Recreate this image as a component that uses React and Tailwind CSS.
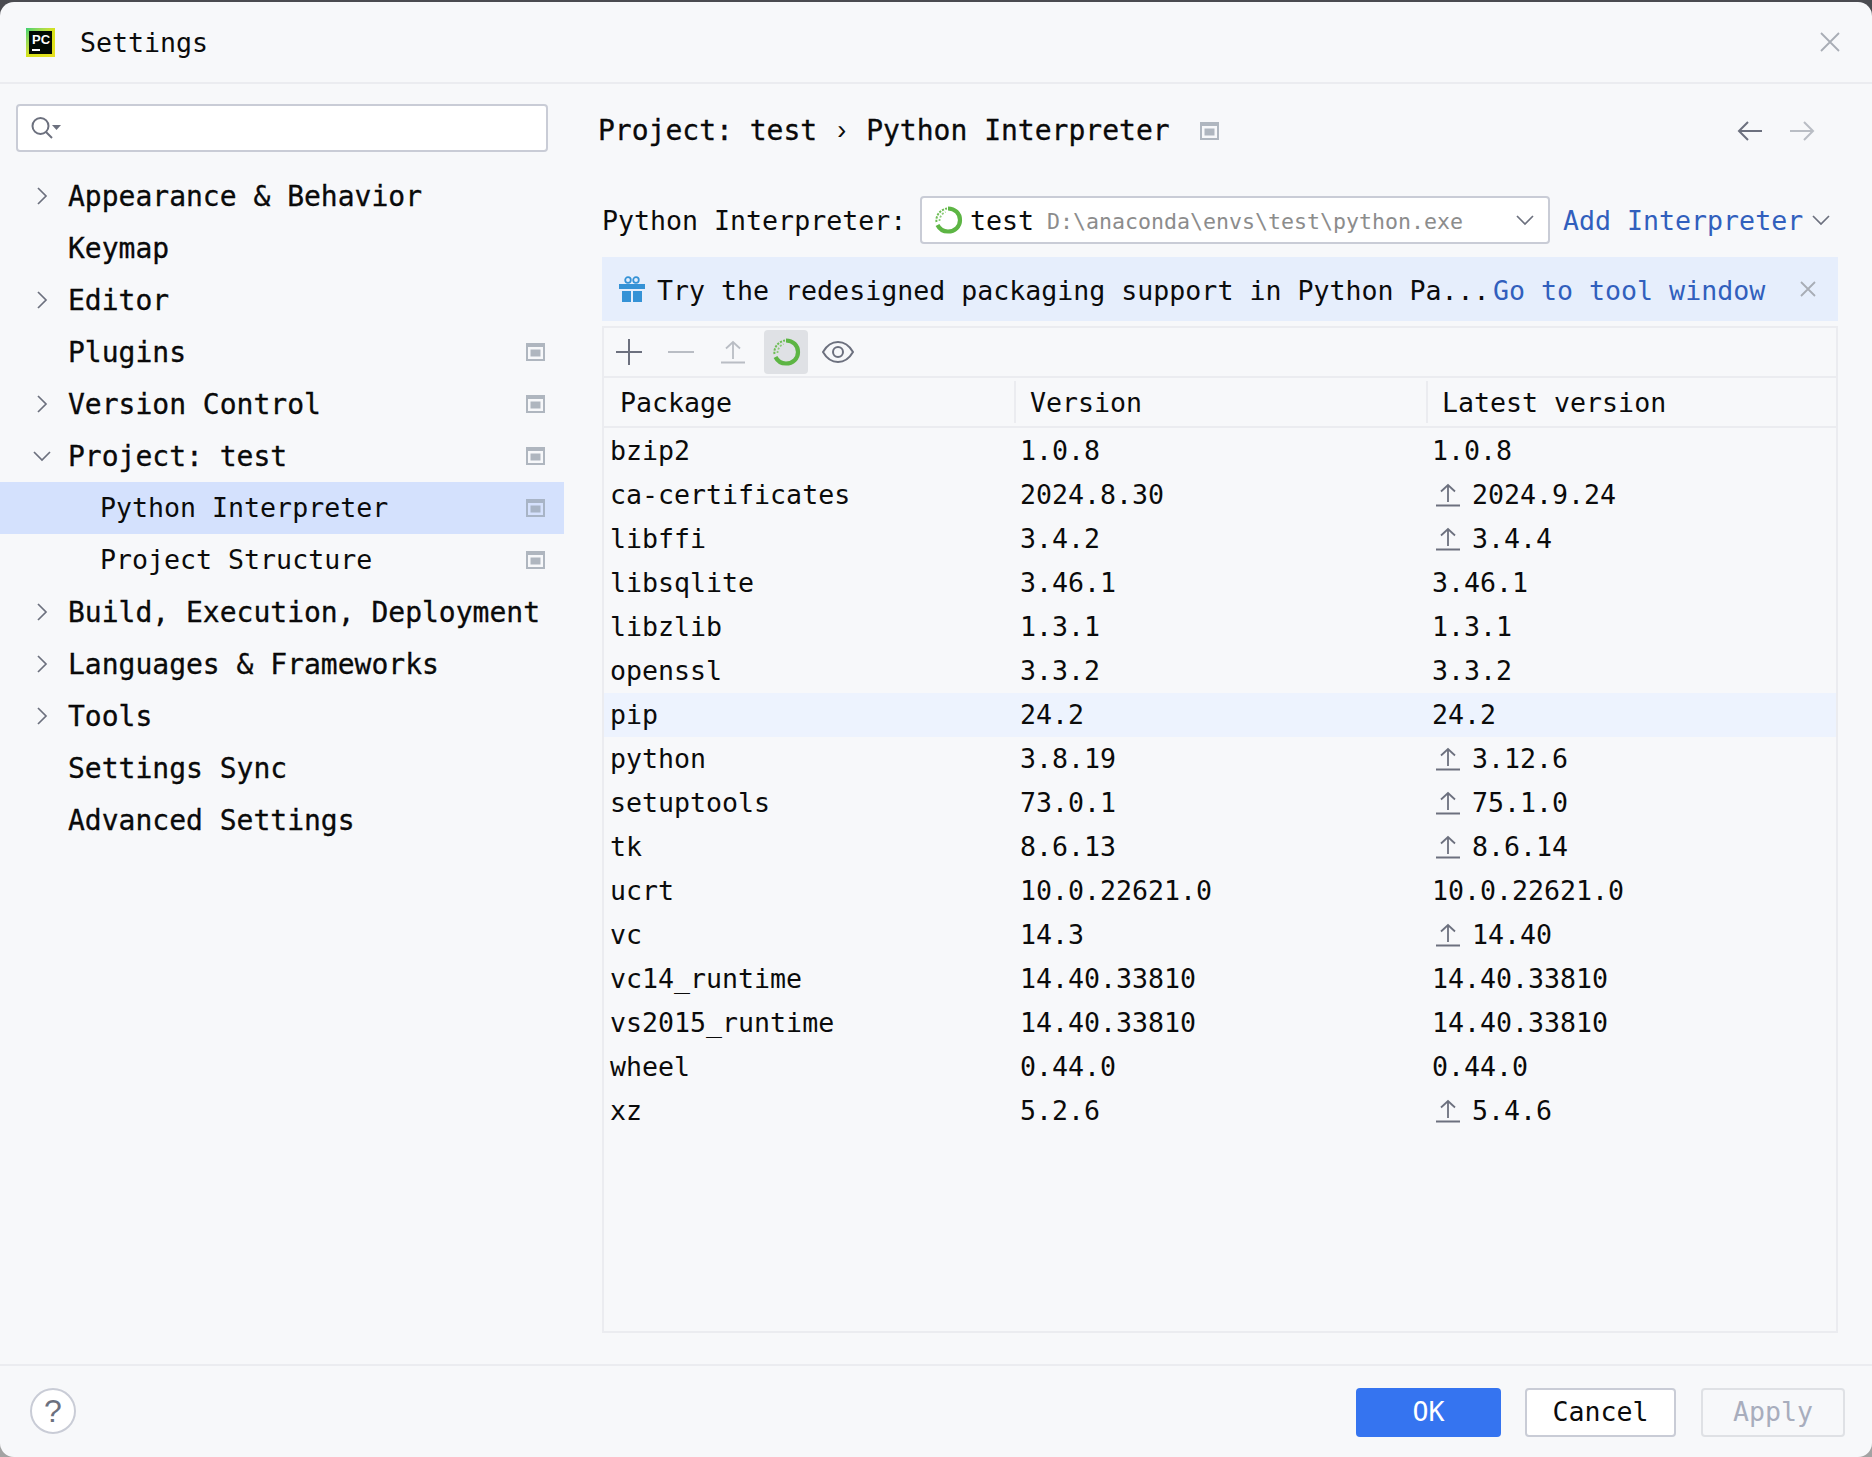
import React from "react";

const tree = [
  { label: "Appearance & Behavior", arrow: "right" },
  { label: "Keymap" },
  { label: "Editor", arrow: "right" },
  { label: "Plugins", badge: true },
  { label: "Version Control", arrow: "right", badge: true },
  { label: "Project: test", arrow: "down", badge: true },
  { label: "Python Interpreter", sub: true, badge: true, selected: true },
  { label: "Project Structure", sub: true, badge: true },
  { label: "Build, Execution, Deployment", arrow: "right" },
  { label: "Languages & Frameworks", arrow: "right" },
  { label: "Tools", arrow: "right" },
  { label: "Settings Sync" },
  { label: "Advanced Settings" },
];

const packages = [
  ["bzip2", "1.0.8", "1.0.8"],
  ["ca-certificates", "2024.8.30", "2024.9.24", true],
  ["libffi", "3.4.2", "3.4.4", true],
  ["libsqlite", "3.46.1", "3.46.1"],
  ["libzlib", "1.3.1", "1.3.1"],
  ["openssl", "3.3.2", "3.3.2"],
  ["pip", "24.2", "24.2"],
  ["python", "3.8.19", "3.12.6", true],
  ["setuptools", "73.0.1", "75.1.0", true],
  ["tk", "8.6.13", "8.6.14", true],
  ["ucrt", "10.0.22621.0", "10.0.22621.0"],
  ["vc", "14.3", "14.40", true],
  ["vc14_runtime", "14.40.33810", "14.40.33810"],
  ["vs2015_runtime", "14.40.33810", "14.40.33810"],
  ["wheel", "0.44.0", "0.44.0"],
  ["xz", "5.2.6", "5.4.6", true],
];

function Chevron({ dir, className = "" }) {
  const points = dir === "down" ? "1,5 9,13 17,5" : "5,1 13,9 5,17";
  return (
    <svg width="18" height="18" viewBox="0 0 18 18" fill="none" className={className}>
      <polyline points={points} stroke="#6c707e" strokeWidth="1.7" />
    </svg>
  );
}

function ProjectBadge({ selected }) {
  return (
    <svg width="19" height="18" viewBox="0 0 19 18">
      <rect width="19" height="18" fill={selected ? "#a8b4c6" : "#afb6bf"} />
      <rect x="2" y="4" width="15" height="12" fill={selected ? "#d5e1fd" : "#f7f8fa"} />
      <rect x="4.5" y="6.5" width="10" height="7" fill={selected ? "#a8b4c6" : "#afb6bf"} />
    </svg>
  );
}

// conda ring: solid on the right, speckled on the upper left
function CondaRing() {
  return (
    <svg width="30" height="28" viewBox="0 0 30 28" fill="none">
      <path d="M15 2.5C22 2.5 27 7.5 27 14C27 20.5 22 25.5 15 25.5C10 25.5 6.5 23 4.5 19" stroke="#5db544" strokeWidth="4.2" />
      <path d="M3.5 16C2.5 10 7 3.5 14 2.5" stroke="#6dbd55" strokeWidth="2" strokeDasharray="2.2 1.2" />
      <path d="M6.5 15C6.5 11 9 7.5 12.5 6" stroke="#8ccb78" strokeWidth="1.8" strokeDasharray="2 1.6" />
    </svg>
  );
}

function UpgradeIcon({ color = "#6c707e" }) {
  return (
    <svg width="24" height="24" viewBox="0 0 24 24" fill="none">
      <path d="M12 19V2M5 8.5 12 2l7 6.5" stroke={color} strokeWidth="1.8" />
      <path d="M0 22.5h24" stroke={color} strokeWidth="2" />
    </svg>
  );
}

function Icon({ children, w = 24, h = 24, className = "" }) {
  return (
    <svg width={w} height={h} viewBox={`0 0 ${w} ${h}`} fill="none" className={className}>
      {children}
    </svg>
  );
}

function SideRow({ item }) {
  return (
    <div
      className={`relative flex h-[52px] items-center pr-[19px] ${item.sub ? "pl-[100px]" : "pl-[68px]"} ${
        item.selected ? "bg-[#d4e1fd]" : ""
      }`}
    >
      {item.arrow && <Chevron dir={item.arrow} className="absolute left-[33px] top-[17px]" />}
      <span className={`flex-1 whitespace-pre pt-[1px] ${item.sub ? "" : "text-[28px] [-webkit-text-stroke:0.3px_#000]"}`}>{item.label}</span>
      {item.badge && <ProjectBadge selected={item.selected} />}
    </div>
  );
}

function PackageRow({ name, version, latest, upgrade }) {
  return (
    <div className={`grid h-[44px] grid-cols-[410px_412px_1fr] items-center ${name === "pip" ? "bg-[#edf3fe]" : ""}`}>
      <span className="pl-[6px]">{name}</span>
      <span className="pl-[6px]">{version}</span>
      {upgrade ? (
        <span className="flex items-center pl-[10px]">
          <UpgradeIcon />
          <span className="ml-[12px]">{latest}</span>
        </span>
      ) : (
        <span className="pl-[6px]">{latest}</span>
      )}
    </div>
  );
}

export default function App() {
  return (
    <div className="flex h-[1457px] w-[1872px] flex-col bg-linear-to-b from-[#4a4b50] to-[#a3a3a3] pt-[2px] font-['DejaVu_Sans_Mono',monospace] text-[26.6px] leading-none text-[#0b0b0b]">
      <div className="flex flex-1 flex-col overflow-hidden rounded-[14px] bg-[#f7f8fa]">
        {/* title bar */}
        <div className="flex h-[82px] items-center border-b-2 border-[#ebecf0] pl-[26px] pr-[32px]">
          <div className="relative h-[29px] w-[29px] bg-linear-to-br from-[#35d070] via-[#d6e21a] to-[#e8e020] p-[3px]">
            <div className="h-full w-full bg-[#020a03]" />
            <span className="absolute left-[6px] top-[5px] font-['Liberation_Sans',sans-serif] text-[13px] font-bold leading-none text-white">PC</span>
            <span className="absolute bottom-[6px] left-[6px] h-[2px] w-[8px] bg-white" />
          </div>
          <span className="ml-[25px] flex-1 pt-[2px]">Settings</span>
          <Icon w={20} h={20}>
            <path d="M1 1l18 18M19 1 1 19" stroke="#a8adb5" strokeWidth="1.8" />
          </Icon>
        </div>

        <div className="flex flex-1">
          {/* sidebar */}
          <div className="w-[564px] pt-[20px]">
            <div className="ml-[16px] flex h-[48px] w-[532px] items-center rounded-[4px] border-2 border-[#c9ccd6] bg-white pl-[12px]">
              <Icon w={34} h={28}>
                <circle cx="10.5" cy="12" r="8" stroke="#6c707e" strokeWidth="2" />
                <path d="M16 18l6 6" stroke="#6c707e" strokeWidth="2" />
                <path d="M22 11h9l-4.5 5z" fill="#6c707e" />
              </Icon>
            </div>
            <div className="mt-[18px]">
              {tree.map((item) => (
                <SideRow key={item.label} item={item} />
              ))}
            </div>
          </div>

          {/* content */}
          <div className="flex flex-1 flex-col pb-[31px] pl-[38px] pr-[34px]">
            <div className="-ml-[4px] flex h-[93px] items-center">
              <span className="whitespace-pre text-[28px] [-webkit-text-stroke:0.3px_#000]">Project: test</span>
              <span className="mx-[20px] font-['Liberation_Sans',sans-serif] text-[27px]">›</span>
              <span className="whitespace-pre text-[28px] [-webkit-text-stroke:0.3px_#000]">Python Interpreter</span>
              <span className="ml-[30px] flex-1">
                <ProjectBadge />
              </span>
              <Icon w={26} h={22} className="mr-[26px]">
                <path d="M25 11H2M11 2l-9 9 9 9" stroke="#6c707e" strokeWidth="2" />
              </Icon>
              <Icon w={26} h={22} className="mr-[23px]">
                <path d="M1 11h23M15 2l9 9-9 9" stroke="#b9bdc4" strokeWidth="2" />
              </Icon>
            </div>

            <div className="mt-[19px] flex h-[48px] items-center">
              <span className="w-[318px] whitespace-pre pt-[2px]">Python Interpreter:</span>
              <div className="flex h-[48px] w-[630px] items-center rounded-[4px] border-2 border-[#c9ccd6] bg-white pl-[11px] pr-[14px]">
                <CondaRing />
                <span className="ml-[7px] pt-[2px]">test</span>
                <span className="ml-[13px] flex-1 whitespace-pre pt-[4px] text-[21.6px] text-[#8c8c8c]">D:\anaconda\envs\test\python.exe</span>
                <Chevron dir="down" />
              </div>
              <span className="ml-[13px] whitespace-pre pt-[2px] text-[#315fbd]">Add Interpreter</span>
              <Chevron dir="down" className="ml-[9px]" />
            </div>

            <div className="mt-[13px] flex h-[64px] items-center bg-[#e6eefc] pl-[17px] pr-[22px]">
              <Icon w={26} h={26}>
                <path d="M0 8h26v5H0zM3 15h9v11H3zM14 15h9v11h-9z" fill="#3592d6" />
                <circle cx="9" cy="4" r="2.8" stroke="#3592d6" strokeWidth="1.8" />
                <circle cx="17" cy="4" r="2.8" stroke="#3592d6" strokeWidth="1.8" />
              </Icon>
              <span className="ml-[12px] w-[836px] whitespace-pre pt-[4px]">Try the redesigned packaging support in Python Pa...</span>
              <span className="flex-1 whitespace-pre pt-[4px] text-[#315fbd]">Go to tool window</span>
              <Icon w={16} h={16}>
                <path d="M1 1l14 14M15 1 1 15" stroke="#a8adb5" strokeWidth="1.8" />
              </Icon>
            </div>

            <div className="mt-[5px] flex flex-1 flex-col border-2 border-[#ebecf0]">
              {/* toolbar */}
              <div className="flex h-[50px] items-center border-b-2 border-[#ebecf0] pl-[11px]">
                <Icon w={28} h={28}>
                  <path d="M14 1v26M1 14h26" stroke="#6c707e" strokeWidth="2" />
                </Icon>
                <Icon w={28} h={28} className="ml-[24px]">
                  <path d="M1 14h26" stroke="#b9bdc4" strokeWidth="2" />
                </Icon>
                <span className="ml-[26px]">
                  <UpgradeIcon color="#b9bdc4" />
                </span>
                <div className="ml-[19px] flex h-[44px] w-[44px] items-center justify-center rounded-[4px] bg-[#dfe1e5]">
                  <CondaRing />
                </div>
                <Icon w={32} h={24} className="ml-[14px]">
                  <path d="M1 12C5 5 10 2 16 2s11 3 15 10c-4 7-9 10-15 10S5 19 1 12z" stroke="#6c707e" strokeWidth="2" />
                  <circle cx="16" cy="12" r="5" stroke="#6c707e" strokeWidth="2" />
                </Icon>
              </div>
              {/* header */}
              <div className="grid h-[50px] grid-cols-[410px_412px_1fr] items-center border-b-2 border-[#ebecf0]">
                <span className="pl-[16px] pt-[2px]">Package</span>
                <span className="flex h-[42px] items-center border-l-2 border-[#ebecf0] pl-[14px] pt-[2px]">Version</span>
                <span className="flex h-[42px] items-center border-l-2 border-[#ebecf0] pl-[14px] pt-[2px]">Latest version</span>
              </div>
              <div className="pt-[1px]">
                {packages.map(([name, version, latest, upgrade]) => (
                  <PackageRow key={name} name={name} version={version} latest={latest} upgrade={upgrade} />
                ))}
              </div>
            </div>
          </div>
        </div>

        {/* footer */}
        <div className="flex h-[93px] items-start border-t-2 border-[#ebecf0] pl-[30px] pr-[27px] pt-[22px]">
          <div className="flex h-[46px] w-[46px] items-center justify-center rounded-full border-2 border-[#c9ccd6] bg-white font-['Liberation_Sans',sans-serif] text-[32px] text-[#6c707e]">
            ?
          </div>
          <div className="flex-1" />
          <button className="h-[49px] w-[145px] rounded-[4px] bg-[#3574f0] text-white">OK</button>
          <button className="ml-[24px] h-[49px] w-[151px] rounded-[4px] border-2 border-[#c9ccd6] bg-white">Cancel</button>
          <button className="ml-[25px] h-[49px] w-[144px] rounded-[4px] border-2 border-[#dfe1e5] text-[#a8adbd]">Apply</button>
        </div>
      </div>
    </div>
  );
}
